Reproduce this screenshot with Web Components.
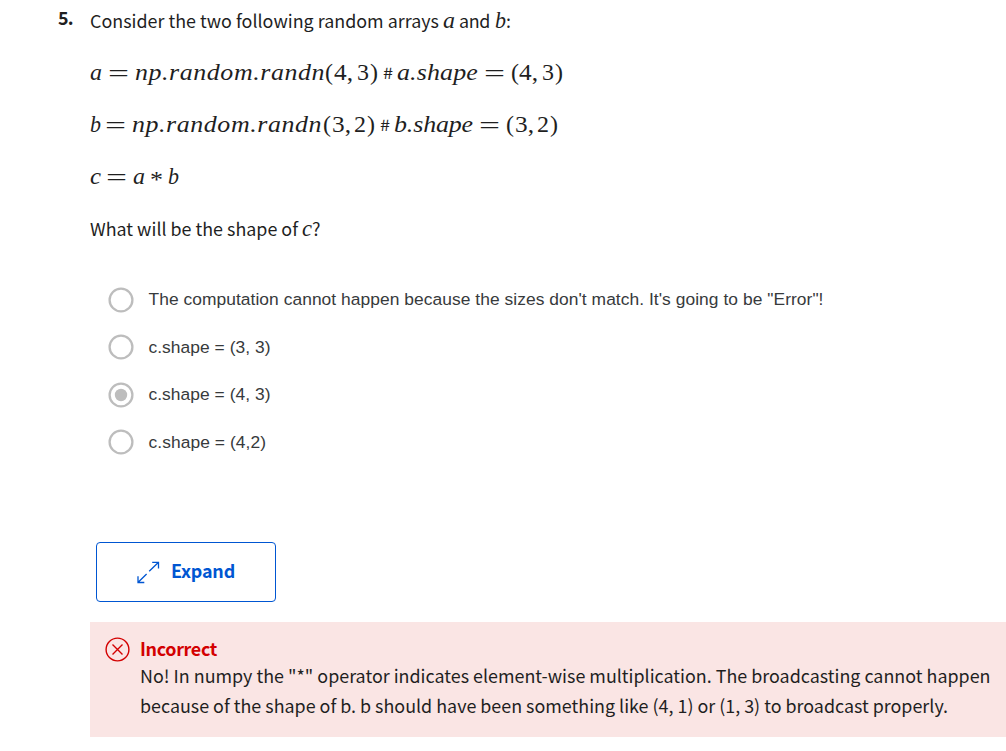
<!DOCTYPE html>
<html lang="en">
<head>
<meta charset="utf-8">
<title>Quiz question</title>
<style>
html,body{margin:0;background:#fff}
body{height:751px;overflow:hidden;font:17.9px "Noto Sans CJK SC",sans-serif;color:#1f1f1f}
</style>
</head>
<body>
<quiz-question></quiz-question>
<script>
// A run of text set to a given width by tracking.
class TextRun extends HTMLElement{
  connectedCallback(){
    const r=this.attachShadow({mode:'open'});
    r.innerHTML='<style>:host{display:inline-block;white-space:nowrap;line-height:inherit}span{display:inline-block}</style><span><slot></slot></span>';
    const s=r.querySelector('span'),w=+this.getAttribute('w');
    const n=this.textContent.length;
    s.style.letterSpacing=((w-s.getBoundingClientRect().width)/n)+'px';
    this.style.width=w+'px';
  }
}
// A fragment of a formula: w is its width, x the space before it.
class MathRun extends HTMLElement{
  connectedCallback(){
    const r=this.attachShadow({mode:'open'});
    r.innerHTML=`<style>:host{display:inline-block;white-space:nowrap;line-height:1;font-family:"Liberation Serif",serif;font-size:24px;font-style:italic}
    :host([up]){font-style:normal}:host([hash]){font:15.5px "Noto Sans CJK SC",sans-serif;line-height:1}:host([hash]) span{position:relative;top:-1px}
    :host([eq]){font-style:normal;font-size:25px}:host([eq]) span{position:relative;top:2px}
    :host([star]) span{position:relative;top:3px}
    span{display:inline-block;transform-origin:0 50%}</style><span><slot></slot></span>`;
    const s=r.querySelector('span'),w=+this.getAttribute('w');
    const n=this.textContent.length;
    let nat=s.getBoundingClientRect().width;
    if(n>4){s.style.letterSpacing=((w-nat*1.08)/n/1.08)+'px';nat=w/1.08}
    s.style.transform=`scaleX(${w/nat})`;
    this.style.width=w+'px';
    this.style.marginLeft=(this.getAttribute('x')||0)+'px';
    s.style.width=nat+'px';
  }
}
class MathLine extends HTMLElement{
  connectedCallback(){
    this.attachShadow({mode:'open'}).innerHTML='<style>:host{display:block;height:52px;line-height:52px;white-space:nowrap}.l{display:flex;align-items:baseline}.l::before{content:"\\200b"}</style><div class="l"><slot></slot></div>';
  }
}
class QuizOption extends HTMLElement{
  connectedCallback(){
    this.attachShadow({mode:'open'}).innerHTML=`<style>:host{display:flex;align-items:center;height:47.5px;font:17.4px "Liberation Sans",sans-serif;color:#373a3c}
    svg{flex:none;margin-right:14.5px}.t{line-height:20px;padding-bottom:1px}</style>
    <svg width="26" height="26" viewBox="0 0 26 26"><circle cx="13" cy="13" r="11.4" fill="none" stroke="#bdbdbd" stroke-width="2.3"/>${this.hasAttribute('checked')?'<circle cx="13" cy="13" r="6.2" fill="#bdbdbd"/>':''}</svg><div class="t"><slot></slot></div>`;
  }
}
class ExpandButton extends HTMLElement{
  connectedCallback(){
    this.attachShadow({mode:'open'}).innerHTML=`<style>:host{display:block;width:180px;height:60px}
    button{box-sizing:border-box;width:100%;height:100%;padding:0 0 0 40px;display:flex;align-items:center;background:#fff;border:1.4px solid #0056d2;border-radius:4px;color:#0056d2;font:bold 17.9px/26px "Noto Sans CJK SC",sans-serif}
    svg{margin-right:11px}.t{padding-bottom:5px}</style>
    <button><svg width="23" height="24" viewBox="0 0 23 24" fill="none" stroke="#0056d2" stroke-width="1.3"><path d="M15.2 2.3H21.5V8.6M21.3 2.5L12.2 11.3M1 16.2V22.5H7.3M1.2 22.3L9.6 14"/></svg><div class="t"><slot></slot></div></button>`;
  }
}
class FeedbackPanel extends HTMLElement{
  connectedCallback(){
    this.attachShadow({mode:'open'}).innerHTML=`<style>:host{display:flex;box-sizing:border-box;height:115px;background:#fae5e4;padding:11px 0 0 15px}
    svg{flex:none;margin:4px 10px 0 0}.h{color:#d30001;font-weight:bold;line-height:30px;height:27px}.b{line-height:30px}</style>
    <svg width="25" height="25" viewBox="0 0 25 25" fill="none" stroke="#d30001" stroke-width="1.4"><circle cx="12.5" cy="12.5" r="11.4"/><path d="M7.5 7.5L17.5 17.5M17.5 7.5L7.5 17.5"/></svg>
    <div><div class="h"><slot name="title"></slot></div><div class="b"><slot></slot></div></div>`;
  }
}
class QuizQuestion extends HTMLElement{
  connectedCallback(){
    this.attachShadow({mode:'open'}).innerHTML=`<style>
    :host{display:grid;grid-template-columns:90px 916px;color:#1f1f1f}
    .n{font-weight:bold;padding:2px 0 0 58px;line-height:30px}
    .p{padding-top:5px;height:41px;line-height:30px;display:flex;align-items:baseline}
    .q{height:52px;line-height:52px;display:flex;align-items:baseline}
    .o{margin:22px 0 0 18px;height:190px}
    expand-button{margin:76px 0 20px 6px}
    .r{display:block;height:30px}
    </style>
    <div class="n"><text-run w="15">5.</text-run></div>
    <div>
      <div class="p"><text-run w="349">Consider the two following random arrays</text-run><math-run x="4" w="12">a</math-run><text-run style="margin-left:4px" w="31">and</text-run><math-run x="5" w="11">b</math-run><text-run w="5">:</text-run></div>
      <math-line><math-run w="12">a</math-run><math-run eq x="6" w="21">=</math-run><math-run x="6" w="190">np.random.randn</math-run><math-run up w="8">(</math-run><math-run up x="1" w="19">4,</math-run><math-run up x="4" w="12">3</math-run><math-run up x="1" w="8">)</math-run><math-run hash x="5" w="10">#</math-run><math-run x="4" w="81">a.shape</math-run><math-run eq x="6" w="21">=</math-run><math-run up x="6" w="8">(</math-run><math-run up w="19">4,</math-run><math-run up x="4" w="12">3</math-run><math-run up x="1" w="8">)</math-run></math-line>
      <math-line><math-run w="11">b</math-run><math-run eq x="4" w="21">=</math-run><math-run x="6" w="190">np.random.randn</math-run><math-run up x="1" w="8">(</math-run><math-run up x="1" w="19">3,</math-run><math-run up x="3" w="12">2</math-run><math-run up x="1" w="8">)</math-run><math-run hash x="5" w="10">#</math-run><math-run x="4" w="79">b.shape</math-run><math-run eq x="6" w="21">=</math-run><math-run up x="6" w="8">(</math-run><math-run up x="1" w="19">3,</math-run><math-run up x="3" w="12">2</math-run><math-run up x="1" w="8">)</math-run></math-line>
      <math-line><math-run w="11">c</math-run><math-run eq x="5" w="21">=</math-run><math-run x="6" w="12">a</math-run><math-run up star x="5" w="13">*</math-run><math-run x="5" w="11">b</math-run></math-line>
      <div class="q"><text-run w="208">What will be the shape of</text-run><math-run x="4" w="10">c</math-run><text-run w="9">?</text-run></div>
      <div class="o">
        <quiz-option><text-run w="675">The computation cannot happen because the sizes don't match. It's going to be "Error"!</text-run></quiz-option>
        <quiz-option><text-run w="122">c.shape = (3, 3)</text-run></quiz-option>
        <quiz-option checked><text-run w="122">c.shape = (4, 3)</text-run></quiz-option>
        <quiz-option><text-run w="117.5">c.shape = (4,2)</text-run></quiz-option>
      </div>
      <expand-button><text-run w="64">Expand</text-run></expand-button>
      <feedback-panel><text-run slot="title" w="77">Incorrect</text-run>
        <text-run class="r" w="850.5">No! In numpy the "*" operator indicates element-wise multiplication. The broadcasting cannot happen</text-run>
        <text-run class="r" w="808">because of the shape of b. b should have been something like (4, 1) or (1, 3) to broadcast properly.</text-run>
      </feedback-panel>
    </div>`;
  }
}
customElements.define('math-line',MathLine);
customElements.define('quiz-option',QuizOption);
customElements.define('expand-button',ExpandButton);
customElements.define('feedback-panel',FeedbackPanel);
customElements.define('text-run',TextRun);
customElements.define('math-run',MathRun);
customElements.define('quiz-question',QuizQuestion);
</script>
</body>
</html>
